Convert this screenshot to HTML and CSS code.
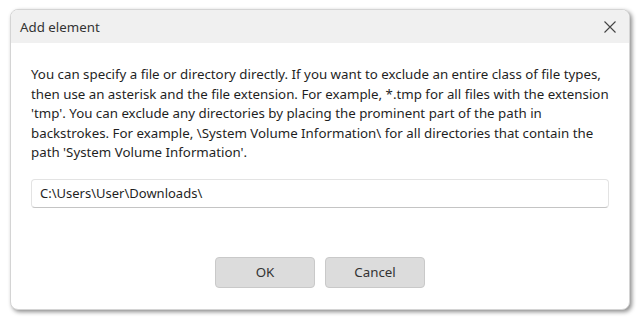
FILE: index.html
```html
<!DOCTYPE html>
<html lang="en">
<head>
    <meta charset="UTF-8">
    <title>Add element</title>
    <link rel="stylesheet" href="styles.css">
</head>
<body>
    <div class="dialog">
        <div class="title-bar">
            <span class="title">Add element</span>
            <button class="close-button" aria-label="Close">
                <svg width="12" height="12" viewBox="0 0 12 12">
                    <path d="M0.5 0.5 L11.5 11.5 M11.5 0.5 L0.5 11.5" stroke="#444" stroke-width="1.1" fill="none"/>
                </svg>
            </button>
        </div>
        <div class="content">
            <p class="hint">
                You can specify a file or directory directly. If you want to exclude an entire class of file types,<br>
                then use an asterisk and the file extension. For example, *.tmp for all files with the extension<br>
                'tmp'. You can exclude any directories by placing the prominent part of the path in<br>
                backstrokes. For example, \System Volume Information\ for all directories that contain the<br>
                path 'System Volume Information'.
            </p>
            <input type="text" class="path-input" value="C:\Users\User\Downloads\">
            <div class="buttons">
                <button class="dialog-button">OK</button>
                <button class="dialog-button">Cancel</button>
            </div>
        </div>
    </div>
</body>
</html>
```

FILE: styles.css
```css
body {
    margin: 0;
    padding: 9px 10px;
    background: #ffffff;
    font-family: 'Noto Sans', sans-serif;
    color: #1f1f1f;
}

.dialog {
    width: 620px;
    height: 301px;
    box-sizing: border-box;
    border: 1px solid #d4d4d4;
    border-radius: 8px;
    background: #ffffff;
    box-shadow: 2px 2px 4px rgba(0, 0, 0, 0.45);
    overflow: hidden;
    display: flex;
    flex-direction: column;
}

.title-bar {
    height: 33px;
    background: #f0f0f0;
    display: flex;
    align-items: center;
    justify-content: space-between;
    padding: 0 13px 0 9px;
    flex-shrink: 0;
}

.title {
    font-size: 13.3px;
    color: #333;
}

.close-button {
    background: none;
    border: none;
    padding: 0;
    width: 12px;
    height: 12px;
    display: flex;
}

.content {
    padding: 22px 20px 0 20px;
    display: flex;
    flex-direction: column;
}

.hint {
    margin: 0;
    white-space: nowrap;
    font-size: 13.3px;
    line-height: 19.5px;
    color: #1f1f1f;
}

.path-input {
    margin-top: 16px;
    height: 29px;
    box-sizing: border-box;
    border: 1px solid #e3e3e3;
    border-bottom-color: #c4c4c4;
    border-radius: 4px;
    padding: 0 8px;
    font-family: 'Noto Sans', sans-serif;
    font-size: 13px;
    color: #1f1f1f;
}

.buttons {
    display: flex;
    justify-content: center;
    gap: 10px;
    margin-top: 49px;
}

.dialog-button {
    width: 100px;
    height: 31px;
    background: #dcdcdc;
    border: 1px solid #c9c9c9;
    border-radius: 4px;
    font-family: 'Noto Sans', sans-serif;
    font-size: 13.3px;
    color: #333;
}
```
